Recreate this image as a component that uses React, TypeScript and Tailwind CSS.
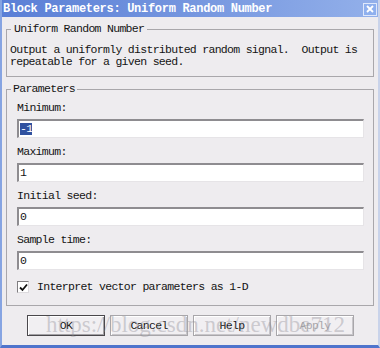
import React from "react";

const mono = "font-['Liberation_Mono',monospace] text-[11.5px] tracking-[-0.7px] leading-[12px] text-[#141414]";

const fields = [
  { label: "Minimum:", value: "-1", selected: true },
  { label: "Maximum:", value: "1" },
  { label: "Initial seed:", value: "0" },
  { label: "Sample time:", value: "0" },
];

const buttons = [
  { label: "OK", isDefault: true },
  { label: "Cancel" },
  { label: "Help" },
  { label: "Apply", disabled: true },
];

const App: React.FC = () => {
  return (
    <div className="relative w-[380px] h-[348px] overflow-hidden bg-[#eeecef] border-l-2 border-l-[#86a4e2] border-r-2 border-r-[#c9d3ea] border-b-[3px] border-b-[#4f74cc] flex flex-col">
      {/* Title bar */}
      <div className="h-[17px] shrink-0 flex items-center justify-between bg-gradient-to-r from-[#5a7fd6] via-[#7596df] to-[#93b0ea] pl-[1px] pr-[1px]">
        <span className="font-['Liberation_Mono',monospace] font-bold text-[12px] tracking-[-0.3px] text-white leading-none">
          Block Parameters: Uniform Random Number
        </span>
        <div className="w-[14px] h-[13px] mt-[1px] bg-[#8fb0ee] border border-[#dfe8fb] flex items-center justify-center">
          <svg width="8" height="8" viewBox="0 0 8 8">
            <path d="M1 1 L7 7 M7 1 L1 7" stroke="white" strokeWidth="1.8" />
          </svg>
        </div>
      </div>

      {/* Description group */}
      <fieldset className="mx-[4px] mt-[6px] border border-[#a9a7ab] pl-[3px] pr-[3px] pt-[9px] pb-[8px]">
        <legend className={`${mono} ml-[1px] px-[3px]`}>Uniform Random Number</legend>
        <p className={`${mono} whitespace-pre`}>
          {"Output a uniformly distributed random signal.  Output is\nrepeatable for a given seed."}
        </p>
      </fieldset>

      {/* Parameters group */}
      <fieldset className="mx-[4px] mt-[6px] border border-[#a9a7ab] pl-[10px] pr-[9px] pt-[7px] pb-[12px]">
        <legend className={`${mono} ml-[-6px] px-[2px]`}>Parameters</legend>
        <div className="flex flex-col gap-[8px]">
          {fields.map((f) => (
            <div key={f.label} className="flex flex-col gap-[5px]">
              <span className={mono}>{f.label}</span>
              <div className="h-[19px] bg-white border-t-2 border-l-2 border-t-[#8e8c90] border-l-[#8e8c90] border-b border-r border-b-[#e6e4e7] border-r-[#e6e4e7] flex items-center pl-[1px]">
                <span
                  className={`${mono} ${f.selected ? "bg-[#30519f] text-white" : ""}`}
                >
                  {f.value}
                </span>
              </div>
            </div>
          ))}
          <label className="flex items-center gap-[8px] mt-[3px]">
            <span className="w-[12px] h-[12px] bg-white border-t border-l border-t-[#7f7d80] border-l-[#7f7d80] border-b border-r border-b-[#dcdadd] border-r-[#dcdadd] flex items-center justify-center">
              <svg width="9" height="9" viewBox="0 0 9 9">
                <path d="M1 4.5 L3.5 7 L8 1.5" fill="none" stroke="#111" strokeWidth="1.8" />
              </svg>
            </span>
            <span className={mono}>Interpret vector parameters as 1-D</span>
          </label>
        </div>
      </fieldset>

      {/* Buttons */}
      <div className="flex gap-[5px] pl-[25px] mt-[9px]">
        {buttons.map((b) => (
          <button
            key={b.label}
            className={`w-[78px] h-[21px] bg-[#f1eff2] flex items-center justify-center border ${
              b.isDefault
                ? "border-[#4a484c] shadow-[inset_1px_1px_0_#fff,inset_-1px_-1px_0_#a3a1a5]"
                : "border-[#a8a6aa] shadow-[inset_1px_1px_0_#fff,inset_-1px_-1px_0_#c8c6ca]"
            }`}
          >
            <span className={`${mono} ${b.disabled ? "text-[#a9a7ab]" : ""}`}>
              {b.label}
            </span>
          </button>
        ))}
      </div>

      {/* Watermark */}
      <div className="pointer-events-none absolute left-[44px] top-[313px] font-['Liberation_Serif',serif] text-[23px] leading-none text-[#8f8e96]/40 whitespace-nowrap">
        https://blog.csdn.net/newdbe712
      </div>
    </div>
  );
};

export default App;
